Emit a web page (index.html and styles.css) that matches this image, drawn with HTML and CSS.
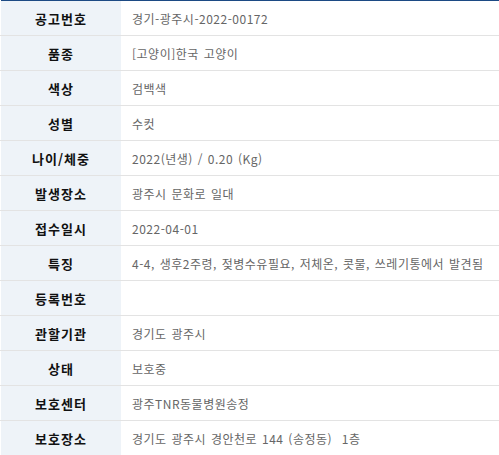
FILE: index.html
```html
<!DOCTYPE html>
<html lang="ko">
<head>
    <meta charset="UTF-8">
    <title>보호동물 상세</title>
    <link rel="stylesheet" href="styles.css">
</head>
<body>
<table class="detail">
    <tr><th>공고번호</th><td>경기-광주시-2022-00172</td></tr>
    <tr><th>품종</th><td>[고양이]한국 고양이</td></tr>
    <tr><th>색상</th><td>검백색</td></tr>
    <tr><th>성별</th><td>수컷</td></tr>
    <tr><th>나이/체중</th><td>2022(년생) / 0.20 (Kg)</td></tr>
    <tr><th>발생장소</th><td>광주시 문화로 일대</td></tr>
    <tr><th>접수일시</th><td>2022-04-01</td></tr>
    <tr><th>특징</th><td>4-4, 생후2주령, 젖병수유필요, 저체온, 콧물, 쓰레기통에서 발견됨</td></tr>
    <tr><th>등록번호</th><td></td></tr>
    <tr><th>관할기관</th><td>경기도 광주시</td></tr>
    <tr><th>상태</th><td>보호중</td></tr>
    <tr><th>보호센터</th><td>광주TNR동물병원송정</td></tr>
    <tr><th>보호장소</th><td>경기도 광주시 경안천로 144 (송정동)&nbsp; 1층</td></tr>
</table>
</body>
</html>
```
FILE: styles.css
```css
body {
    margin: 0;
    font-family: "Noto Sans CJK KR", "Noto Sans", sans-serif;
    background: #fff;
}
.detail {
    width: 499px;
    border-collapse: collapse;
    border-top: 1px solid #1c4a84;
}
.detail th,
.detail td {
    height: 34px;
    padding: 0;
    border-bottom: 1px solid #e3e3e3;
    vertical-align: middle;
}
.detail th {
    width: 120px;
    background: #eef3f8;
    color: #111;
    font-size: 13px;
    font-weight: bold;
    letter-spacing: 1px;
    text-align: center;
    border-left: 1px solid #fff;
}
.detail td {
    padding-left: 11px;
    color: #666;
    font-size: 12px;
    letter-spacing: 0.5px;
    word-spacing: 1px;
    text-align: left;
    white-space: nowrap;
}
```
